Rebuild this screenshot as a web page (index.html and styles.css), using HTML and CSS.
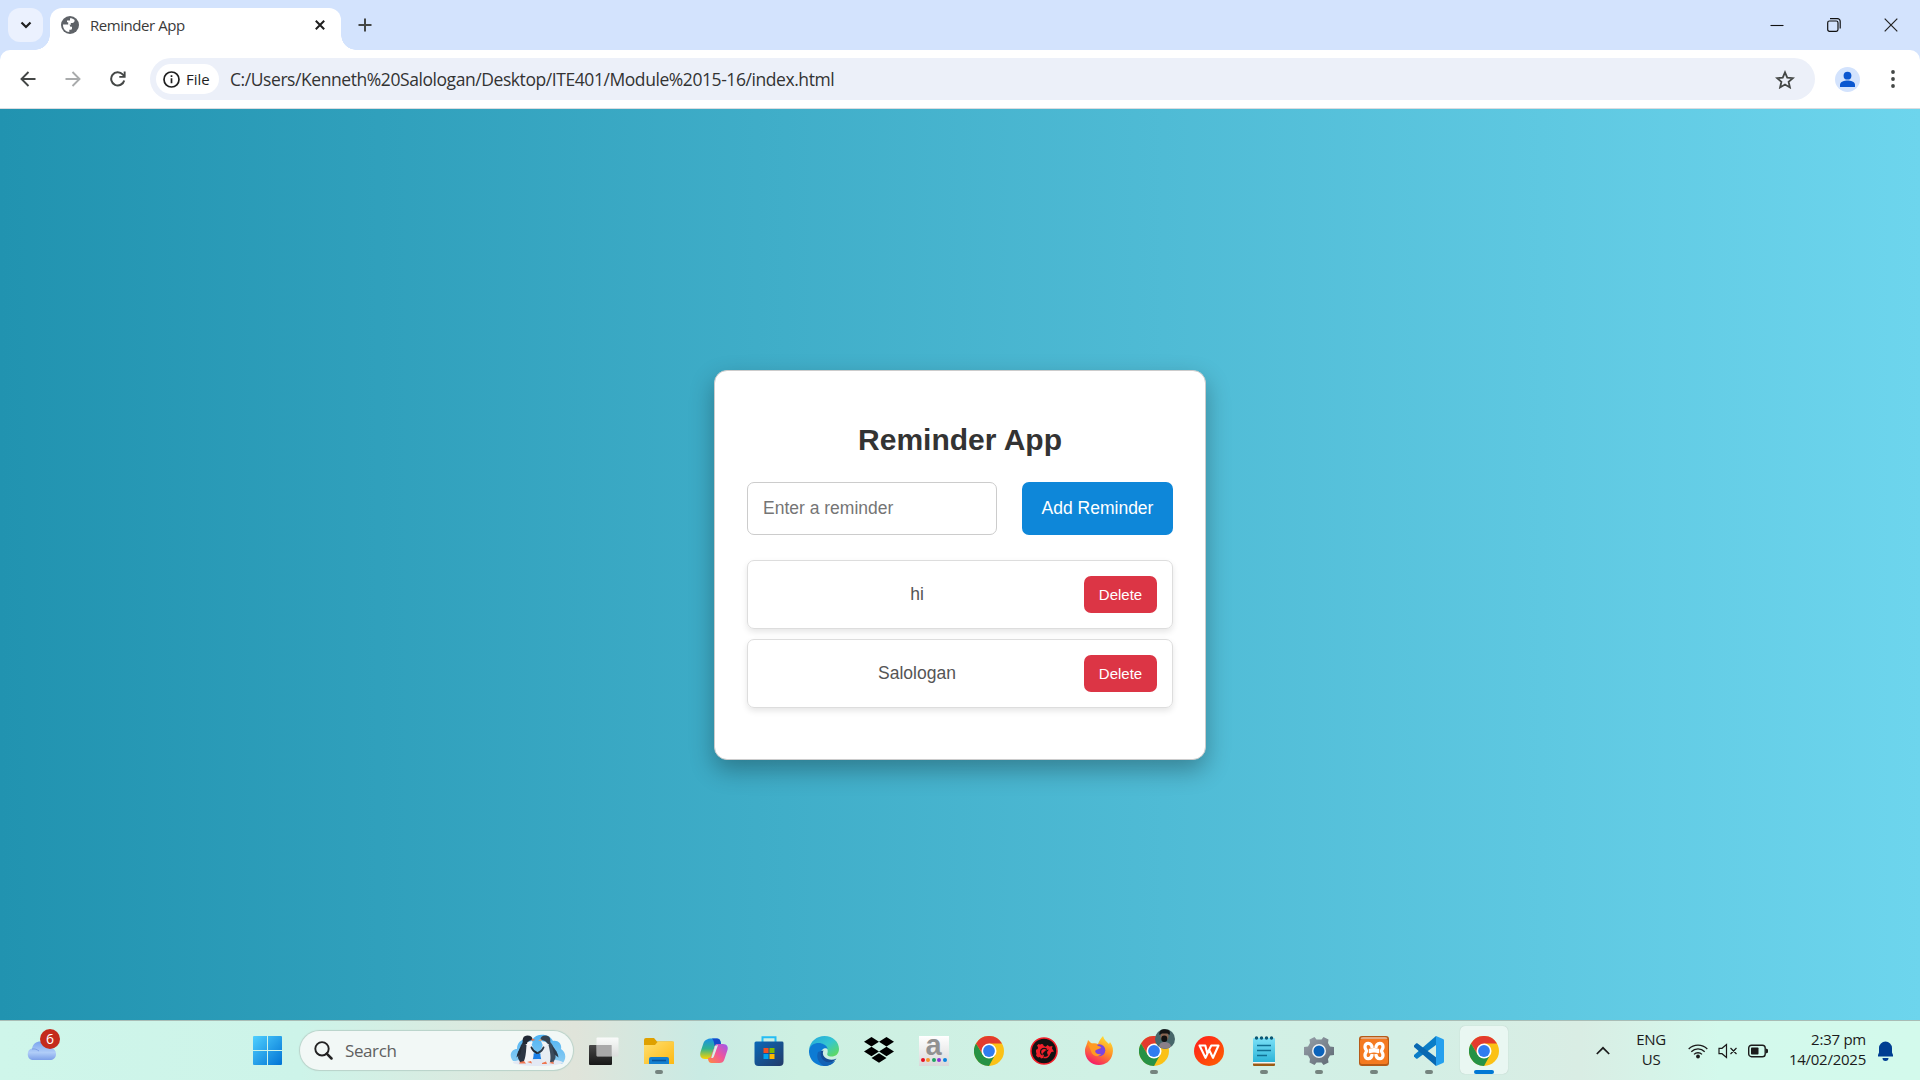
FILE: index.html
```html
<!DOCTYPE html>
<html lang="en">
<head>
<meta charset="utf-8">
<title>Reminder App</title>
<link rel="stylesheet" href="styles.css">
</head>
<body>
<svg class="defs" width="0" height="0" aria-hidden="true">
  <defs>
    <linearGradient id="win" x1="0" y1="0" x2="1" y2="1"><stop offset="0" stop-color="#4fd0ff"/><stop offset="1" stop-color="#0073d4"/></linearGradient>
    <linearGradient id="cloud" x1="0" y1="0" x2="0" y2="1"><stop offset="0" stop-color="#7ba5ee"/><stop offset=".6" stop-color="#b0cdf8"/><stop offset="1" stop-color="#7c9fe8"/></linearGradient>
    <linearGradient id="fold" x1="0" y1="0" x2="1" y2="1"><stop offset="0" stop-color="#ffdf70"/><stop offset="1" stop-color="#fdb913"/></linearGradient>
    <linearGradient id="dark" x1="0" y1="0" x2="0" y2="1"><stop offset="0" stop-color="#484848"/><stop offset="1" stop-color="#171717"/></linearGradient>
    <linearGradient id="cop1" x1="0" y1="0" x2="0" y2="1"><stop offset="0" stop-color="#1b8fe8"/><stop offset=".5" stop-color="#31b48e"/><stop offset="1" stop-color="#ffd400"/></linearGradient>
    <linearGradient id="cop2" x1="1" y1="0" x2="0" y2="1"><stop offset="0" stop-color="#9b56f0"/><stop offset=".5" stop-color="#f0569a"/><stop offset="1" stop-color="#ff8b3d"/></linearGradient>
    <linearGradient id="store" x1="0" y1="0" x2="1" y2="1"><stop offset="0" stop-color="#0a68b8"/><stop offset="1" stop-color="#243a68"/></linearGradient>
    <linearGradient id="edgeTop" x1="0" y1="0" x2="1" y2="1"><stop offset="0" stop-color="#22a6dd"/><stop offset=".5" stop-color="#35c6d0"/><stop offset="1" stop-color="#67dd49"/></linearGradient>
    <linearGradient id="fox" x1=".8" y1="0" x2=".3" y2="1"><stop offset="0" stop-color="#ffe934"/><stop offset=".5" stop-color="#ff8a27"/><stop offset="1" stop-color="#f5156c"/></linearGradient>
    <linearGradient id="wps" x1="0" y1="0" x2="1" y2="1"><stop offset="0" stop-color="#ff1c1c"/><stop offset="1" stop-color="#ff6200"/></linearGradient>
    <linearGradient id="note" x1="0" y1="0" x2="0" y2="1"><stop offset="0" stop-color="#7be0f7"/><stop offset="1" stop-color="#2cb4d8"/></linearGradient>
    <linearGradient id="gear" x1="0" y1="0" x2="1" y2="1"><stop offset="0" stop-color="#98a1aa"/><stop offset="1" stop-color="#5d6772"/></linearGradient>
    <linearGradient id="pond" x1="0" y1="0" x2="0" y2="1"><stop offset="0" stop-color="#4eb3f4"/><stop offset="1" stop-color="#8ccdf2"/></linearGradient>
    <linearGradient id="pane" x1="0" y1="0" x2="0" y2="1"><stop offset="0" stop-color="#fff"/><stop offset="1" stop-color="#dcdcdc"/></linearGradient>
    <symbol id="chrome" viewBox="0 0 30 30">
      <circle cx="15" cy="15" r="15" fill="#fbc116"/>
      <path d="M15 15L8.8 18.5 2 7.5A15 15 0 0 1 28 7.5H15Z" fill="#e33b2e"/>
      <path d="M2 7.5A15 15 0 0 0 15 30L21.3 18.6 15 15 8.6 18.6Z" fill="#269245"/>
      <circle cx="15" cy="15" r="7.5" fill="#fff"/><circle cx="15" cy="15" r="5.9" fill="#2f7cf0"/>
    </symbol>
  </defs>
</svg>

<header class="browser">
  <div class="tabs">
    <button class="tab-search" aria-label="Search tabs"><svg width="12" height="8" viewBox="0 0 12 8"><path d="M1.5 1.5L6 6l4.500-4.500" fill="none" stroke="#1f1f1f" stroke-width="2.200"/></svg></button>
    <div class="tab">
      <svg width="18" height="18" viewBox="0 0 18 18"><circle cx="9" cy="9" r="9" fill="#5f6368"/><path d="M2 8.500h4.500c1.800 0 2.800.9 2.800 2.200H11v1.700c0 .9-.7 1.400-1.600 1.400H8.300V16C4.800 16 2 13 2 9zM9 2.300c2 0 3.400.6 4.600 1.700 0 2.300-1 3-2.300 3H9.800v1.700H7.200V6.200H6V4.500h3z" fill="#fff"/></svg>
      <span class="tab-title">Reminder App</span>
      <svg width="10" height="10" viewBox="0 0 10 10"><path d="M.8.8l8.400 8.400M9.200.8L.8 9.200" stroke="#1f1f1f" stroke-width="2"/></svg>
    </div>
    <svg class="plus" width="14" height="14" viewBox="0 0 14 14"><path d="M7 .500v13M.500 7h13" stroke="#444746" stroke-width="2"/></svg>
    <div class="window-controls">
      <svg width="14" height="14" viewBox="0 0 14 14"><path d="M.500 7.500h13" stroke="#111" stroke-width="1.100"/></svg>
      <svg width="14" height="14" viewBox="0 0 14 14"><g fill="none" stroke="#111" stroke-width="1.200"><rect x=".7" y="3" width="10.300" height="10.300" rx="1.700"/><path d="M3 .700h7.500a2.700 2.700 0 0 1 2.700 2.700v7"/></g></svg>
      <svg width="14" height="14" viewBox="0 0 14 14"><path d="M.700.700l12.600 12.600M13.300.700L.700 13.300" stroke="#222" stroke-width="1.200"/></svg>
    </div>
  </div>
  <div class="toolbar">
    <div class="nav">
      <svg width="16" height="16" viewBox="0 0 16 16"><path d="M15.500 8H2M8.500 1L1.500 8l7 7" fill="none" stroke="#444746" stroke-width="1.900"/></svg>
      <svg width="16" height="16" viewBox="0 0 16 16"><path d="M.500 8H14M7.500 1l7 7-7 7" fill="none" stroke="#a9abac" stroke-width="1.900"/></svg>
      <svg width="16" height="16" viewBox="0 0 16 16"><path d="M14.200 9.400A6.600 6.600 0 1 1 12.700 3.400L14.500 5.300" fill="none" stroke="#444746" stroke-width="2"/><path d="M15.600.500v6.300H9.300V4.900h4.400V.500z" fill="#444746"/></svg>
    </div>
    <div class="omnibox">
      <div class="chip">
        <svg width="17" height="17" viewBox="0 0 17 17"><circle cx="8.500" cy="8.500" r="7.500" fill="none" stroke="#1f1f1f" stroke-width="1.700"/><path d="M8.500 7.300v5M8.500 4.300v1.800" stroke="#1f1f1f" stroke-width="1.700"/></svg>
        <span class="chip-label">File</span>
      </div>
      <span class="url">C:/Users/Kenneth%20Salologan/Desktop/ITE401/Module%2015-16/index.html</span>
      <svg class="star" width="20" height="19" viewBox="0 0 20 19"><path d="M10 2.300l2.250 5.300 5.600.5-4.250 3.700 1.300 5.600L10 14.500l-4.900 2.900 1.300-5.600L2.150 8.100l5.600-.5z" fill="none" stroke="#444746" stroke-width="1.800"/></svg>
    </div>
    <svg class="avatar" width="25" height="25" viewBox="0 0 25 25"><circle cx="12.500" cy="12.500" r="12.500" fill="#d3e3fd"/><circle cx="12.500" cy="8.700" r="3.900" fill="#0b57d0"/><path d="M5 20v-2.200c0-3.200 4.500-4.300 7.500-4.300s7.500 1.100 7.500 4.300V20z" fill="#0b57d0"/></svg>
    <svg class="dots" width="4" height="18" viewBox="0 0 4 18"><g fill="#444746"><circle cx="2" cy="2" r="1.900"/><circle cx="2" cy="9" r="1.900"/><circle cx="2" cy="16" r="1.900"/></g></svg>
  </div>
</header>

<main class="page">
  <section class="card">
    <h1 class="title">Reminder App</h1>
    <div class="form">
      <input class="field" type="text" placeholder="Enter a reminder">
      <button class="add">Add Reminder</button>
    </div>
    <ul class="list">
      <li class="item"><span class="item-text">hi</span><button class="delete">Delete</button></li>
      <li class="item"><span class="item-text">Salologan</span><button class="delete">Delete</button></li>
    </ul>
  </section>
</main>

<footer class="taskbar">
  <div class="weather">
    <svg width="30" height="20" viewBox="0 0 30 20"><path d="M6 19a6 6 0 0 1 0-11.500C7 3 10 .500 14.500.500c4 0 7 2 8 6C27 6.500 30 9 30 13c0 4-3 6-6 6z" fill="url(#cloud)"/><path d="M6 8c3-.5 5 .5 7 2" fill="none" stroke="#7d9fe6"/></svg>
    <span class="badge">6</span>
  </div>
  <div class="apps">
    <div class="app"><svg width="29" height="29" viewBox="0 0 29 29"><path d="M1 0h13v14H0V1a1 1 0 0 1 1-1zM15 0h13a1 1 0 0 1 1 1v13H15zM0 15h14v14H1a1 1 0 0 1-1-1zM15 15h14v13a1 1 0 0 1-1 1H15z" fill="url(#win)"/></svg></div>
    <div class="search">
      <svg width="19" height="19" viewBox="0 0 19 19"><circle cx="8" cy="7.800" r="6.700" fill="none" stroke="#222" stroke-width="1.900"/><path d="M12.700 12.700l4.800 4.800" stroke="#222" stroke-width="2.500" stroke-linecap="round"/></svg>
      <span class="search-label">Search</span>
      <svg width="56" height="33" viewBox="0 0 56 33">
        <path d="M3 27C-2 21 2 15 7 15 7 8 13 3 22 6 26-1 39-1 43 7c6-1 9 4 8 8 5 3 6 10 1 15z" fill="url(#pond)"/>
        <path d="M22 20l5-1 4 1v6h-9z" fill="#1c7fe6"/>
        <ellipse cx="28" cy="28.500" rx="25" ry="3.500" fill="#e3e9f4"/>
        <path d="M14 9h7c2.500 5 3 9 2.500 13-.3 3-1.500 6-4 7h-6z" fill="#f3f4f7"/>
        <path d="M13 8c-3 4-5 10-5 16l2.500 5 3-1c2-4 2.500-9 3-17z" fill="#2a3442"/>
        <path d="M12 12c-3 3-5 7-5.500 11.500l4-3.500z" fill="#222b37"/><path d="M21.500 13.500c1 2.500 3 4.500 5.500 5.500" fill="none" stroke="#222b37" stroke-width="1.900" stroke-linecap="round"/>
        <path d="M13 10c-1-5 0-8.500 4.500-8.500 3 0 5 1.500 5 4L19 7l-2 3z" fill="#222935"/>
        <path d="M17.500 8l4.500-1c1 1 .500 3-1 4h-4z" fill="#f7f7f8"/><path d="M22 4.500l3.500 1.500-4 1z" fill="#e9724a"/>
        <path d="M41 9h-7c-3 5-4 9-3.500 13 .3 3 2 6 4.500 7h6z" fill="#e8edf2"/>
        <path d="M40 8c4 4 6 10 5.500 16L43 29l-3-1c1-4 .500-9-1.500-17z" fill="#3b4b5c"/>
        <path d="M42 12c3.500 3 6 7 6.500 11.500L44 20z" fill="#2d3a49"/><path d="M33.500 13.500c-1 2.500-3 4.500-5.500 5.500" fill="none" stroke="#2d3a49" stroke-width="1.900" stroke-linecap="round"/>
        <path d="M40 10c1-5 0-8.500-4.500-8.500-3 0-5 1.500-5 4L35 7l3 3z" fill="#36424f"/>
        <path d="M31 7l5 1c1 1 1 3 0 4h-3z" fill="#f1f3f5"/><path d="M31 5l-3 1.500 4 .500z" fill="#e5a06c"/>
        <path d="M10 28l4-1 2 2.500H9zM17 28l4-1 1 2.500zM32 29l4-1.500 1 2.500h-5zM39 29l4-1.500 1 2.500z" fill="#ee7650"/>
      </svg>
    </div>
    <div class="app"><svg width="30" height="30" viewBox="0 0 30 30"><rect x="0" y="9" width="23" height="20" rx="1" fill="url(#dark)"/><rect x="7.500" y="1.500" width="22" height="19" rx="1" fill="url(#pane)" opacity=".85"/><path d="M8 9h14.500v11H8z" fill="#a9a9a9"/></svg></div>
    <div class="app open"><svg width="30" height="30" viewBox="0 0 30 30"><path d="M0 4a2 2 0 0 1 2-2h8l3 3.500h15a2 2 0 0 1 2 2V12H0z" fill="#dfa000"/><path d="M0 9h11l3-3.500h16V28H0z" fill="url(#fold)"/><path d="M5 28v-5a2 2 0 0 1 2-2h16a2 2 0 0 1 2 2v5z" fill="#1480d0"/><path d="M8 24.500h14" stroke="#07549c" stroke-width="1.600"/></svg></div>
    <div class="app"><svg width="30" height="30" viewBox="0 0 30 30"><path d="M8 3.500C9 2.700 10 2.500 11 2.500h7c2 0 3 1 3.500 3L22 8h-3c-2 0-3 1-3.500 3l-2.500 8c-1 3-2 4-4 4H6c-4 0-5.500-3-4.500-7L4.500 7C5.200 5 6.500 4 8 3.500z" fill="url(#cop1)"/><path d="M14 2.500h4c2 0 3 1 3.500 3L22 8h-3c-2 0-3 .7-3.500 2C15 7 15 4 13 2.500z" fill="#1549ca"/><path d="M22 8h2c4 0 5.500 3 4.500 6l-3 9c-1 3-2.500 4-5 4h-8c-2 0-2.700-1-3.300-3L9 22c2 0 3-1 3.500-3l3-8C16 9 17 8 19 8z" fill="url(#cop2)"/><path d="M16 10l3-1-4.300 12c-.5 1-1.200 1-2.500 1z" fill="#d9f1e8"/></svg></div>
    <div class="app"><svg width="30" height="30" viewBox="0 0 30 30"><path d="M8.500 8V1.300h13V8" fill="none" stroke="#25bdf4" stroke-width="2"/><path d="M.500 7a1.500 1.500 0 0 1 1.500-1.500h26A1.500 1.500 0 0 1 29.500 7v19a4 4 0 0 1-4 4h-21a4 4 0 0 1-4-4z" fill="url(#store)"/><path d="M9.500 12h5v5h-5z" fill="#f25022"/><path d="M15.500 12h5v5h-5z" fill="#7fba00"/><path d="M9.500 18h5v5h-5z" fill="#00a4ef"/><path d="M15.500 18h5v5h-5z" fill="#ffb900"/></svg></div>
    <div class="app"><svg width="30" height="30" viewBox="0 0 30 30"><path d="M0 14C1 5 8 0 15.500 0 24 0 30 6 30 13c0 5-3.500 7.500-7.500 7.500-3.500 0-5-1.500-4-3.500C20 12 15 7 9 7.500 4.500 8 1 11 0 14z" fill="url(#edgeTop)"/><path d="M0 14.500C1 9 5 7 9.500 7 14 7 18 9.500 18.700 13c-2-2-7 0-7 4.500 0 6 6 9.500 11.300 8.500l3-1C23 28.500 19 30 15 30 6 30-.500 23 0 14.500z" fill="#0d7bd4"/><path d="M12 15c-4 6 2 13 9.500 11.500 2.500-.500 4.500-2 6-4-4 2-9 1.500-12-1.500-2-2-2-4.500-1-6.500z" fill="#134d97"/><path d="M9 16c-2 5 0 11 6 14 5 0 9-2 11-5-8 4-16-1-14-10z" fill="#1262b6"/></svg></div>
    <div class="app"><svg width="30" height="27" viewBox="0 0 30 27"><path d="M7.500 0L15 4.800 7.500 9.500 0 4.800zM22.500 0L30 4.800 22.500 9.500 15 4.800zM7.500 9.800L15 14.500 7.500 19.200 0 14.500zM22.500 9.800L30 14.500 22.500 19.200 15 14.500zM15 16.200L22.500 21 15 25.800 7.500 21z"/></svg></div>
    <div class="app"><div class="amazon"><span class="amazon-a">a</span><div class="amazon-dots"><i></i><i></i><i></i><i></i><i></i></div></div></div>
    <div class="app"><svg width="30" height="30"><use href="#chrome"/></svg></div>
    <div class="app"><svg width="28" height="28" viewBox="0 0 28 28"><circle cx="14" cy="14" r="13" fill="#121212" stroke="#f51d29" stroke-width="1.600"/><path d="M11 7l2 .300.800 1.700 2 .700L17.500 8l2 1.500 3-.500-.500 2.500 2 3-2.500.500-2 3-2-.500-.500-2.500 2-2.500-3.500 1-3 3 1.500 2-1 2.500-2 .500-1-1.500-2 .500-2-2 .500-1.800L6 15v-2.200l1.700-.800.300-1.700-1-1.800L8.700 7l1.500.800z" fill="#f0202b"/><path d="M17 12.500c-3-2.500-6.500-.500-6.500 2.500 0 1.500 1 2.500 2 3" fill="none" stroke="#141414" stroke-width="1.300"/><path d="M13.500 20.500c3 .500 5.500-1 6-4" fill="none" stroke="#f0202b" stroke-width="1.500"/></svg></div>
    <div class="app"><svg width="30" height="30" viewBox="0 0 30 30"><path d="M1 15C1 11 3 9 4 4l4 4c2-1 4-1 6 0 1-3 3-6 5-8 1 4 4 6 6 8l1-2c3 4 3.500 8 2.500 12C27 25 21.500 29 15 29 7 29 1 23 1 15z" fill="url(#fox)"/><circle cx="15.300" cy="14.300" r="6" fill="#7b45df"/><path d="M4 8c4-2 9 0 10 2 2 0 3 1 3 2l-5 2c-2 1 0 5 5 4-3 4-9 2-10-3z" fill="#ff9a22"/></svg></div>
    <div class="app open"><svg width="30" height="30"><use href="#chrome"/></svg>
      <svg class="profile" width="20" height="20" viewBox="0 0 20 20"><circle cx="10" cy="10" r="10" fill="#47666a"/><path d="M4 17.500c.500-3.500 3-4.500 5.500-4.500s6 1 6.500 4.500a10 10 0 0 1-12 0z" fill="#897f88"/><circle cx="9.500" cy="7.500" r="4" fill="#8a6652"/><path d="M4.500 6C3.500 1 8-.500 11 .500c4 0 4.500 3 3.500 5.500L12.500 4.500H7z" fill="#151515"/><ellipse cx="9.300" cy="9.800" rx="3" ry="3.300" fill="#111"/></svg></div>
    <div class="app"><svg width="30" height="30" viewBox="0 0 30 30"><circle cx="15" cy="15" r="15" fill="url(#wps)"/><path d="M5.500 9.500h5.800l2 8 4-8h7.200l-5.500 12.300L15.200 14l-3.700 7.800z" fill="none" stroke="#fff" stroke-width="2.100" stroke-linejoin="round"/></svg></div>
    <div class="app open"><svg width="22" height="30" viewBox="0 0 22 30"><path d="M0 26h22v3a1 1 0 0 1-1 1H1a1 1 0 0 1-1-1z" fill="#9b5a14"/><path d="M0 25h22v2.500H0z" fill="#f4f4f4"/><path d="M0 3a1 1 0 0 1 1-1h20a1 1 0 0 1 1 1v23H0z" fill="url(#note)"/><g fill="#0d5873"><circle cx="3.500" cy="2" r="1.700"/><circle cx="8.500" cy="2" r="1.700"/><circle cx="13.500" cy="2" r="1.700"/><circle cx="18.500" cy="2" r="1.700"/></g><path d="M4 9.500h14M4 14.500h14M4 19.500h10" stroke="#116f93" stroke-width="1.700"/></svg></div>
    <div class="app open"><svg width="30" height="28" viewBox="0 0 30 28"><path d="M10.500 0l2 2.500h5l2-2.500 5 2.500-.500 3.500 2 3.500 4 .500v8l-4 .500-2 3.500.500 3.500-5 2.500-2-2.500h-5l-2 2.500-5-2.500.500-3.500-2-3.500-4-.500v-8l4-.500 2-3.500-.500-3.500z" fill="url(#gear)"/><circle cx="15" cy="14" r="7" fill="#eef2f5"/><circle cx="15" cy="14" r="5.500" fill="#0b63bb"/></svg></div>
    <div class="app open"><svg width="30" height="30" viewBox="0 0 30 30"><rect width="30" height="30" rx="3" fill="#b65a17"/><rect x="1" y="3" width="28" height="25" rx="2" fill="#f47a20"/><path d="M1.500 3Q1.500 1 4 1h22q2.500 0 2.500 2z" fill="#e3ab83"/><g fill="none" stroke="#fff" stroke-width="3.300" stroke-linejoin="round"><path d="M13.200 12C12.500 5.800 5.800 6 6 11c0 2 1.500 3 1.500 4S6 17 6 19c-.200 5 6.500 5.200 7.200-1"/><path d="M16.800 12C17.500 5.800 24.200 6 24 11c0 2-1.500 3-1.500 4s1.500 2 1.500 4c.200 5-6.500 5.200-7.200-1"/><path d="M10.500 13.500q4.500-1.500 9 0v3q-4.500-1.500-9 0z" stroke-width="1.500" fill="#fff"/></g></svg></div>
    <div class="app open"><svg width="30" height="30" viewBox="0 0 30 30"><path d="M22 0L0 19c-.4.500-.4 1 0 1.500l2 2c.5.400 1 .4 1.600 0L24 7.500z" fill="#0a7dc7"/><path d="M0 9.500c-.4.500-.4 1 0 1.500l22 19 1-8L3.600 7.500C3 7 2.500 7 2 7.500z" fill="#0868b2"/><path d="M22 0l7 3c.700.300 1 .8 1 1.500v21c0 .7-.3 1.200-1 1.500l-7 3z" fill="#25a0ee"/></svg></div>
    <div class="app active"><svg width="30" height="30"><use href="#chrome"/></svg></div>
  </div>
  <div class="tray">
    <svg class="chev" width="14" height="9" viewBox="0 0 14 9"><path d="M.8 8L7 1.800 13.200 8" fill="none" stroke="#1b1b1b" stroke-width="1.700"/></svg>
    <div class="lang"><span>ENG</span><span>US</span></div>
    <div class="status">
      <svg width="20" height="16" viewBox="0 0 20 16"><g fill="none" stroke="#1b1b1b" stroke-width="1.300"><path d="M.700 6a13.200 13.200 0 0 1 18.600 0M3.300 8.700a9.500 9.500 0 0 1 13.400 0M6 11.400a5.700 5.700 0 0 1 8 0"/></g><circle cx="10" cy="13.500" r="1.900" fill="#1b1b1b"/></svg>
      <svg width="20" height="16" viewBox="0 0 20 16"><g fill="none" stroke="#1b1b1b" stroke-width="1.200"><path d="M1 5.300h3L8.500 1.500v13L4 10.700H1zM12.500 5l6 6M18.500 5l-6 6"/></g></svg>
      <svg width="20" height="14" viewBox="0 0 20 14"><rect x=".7" y="1.200" width="16.500" height="11.500" rx="2.800" fill="none" stroke="#1b1b1b" stroke-width="1.400"/><rect x="3" y="3.500" width="7.500" height="7" rx=".800" fill="#1b1b1b"/><path d="M18 4.500l2 1v3l-2 1z" fill="#1b1b1b"/></svg>
    </div>
    <div class="clock"><span class="time">2:37 pm</span><span>14/02/2025</span></div>
    <svg class="bell" width="17" height="20" viewBox="0 0 17 20"><path d="M1 15.500V14l1-2.500V7a6.500 6.500 0 0 1 13 0v4.500l1 2.500v1.500zM5.500 17h6a3 3 0 0 1-6 0z" fill="#003e92"/></svg>
  </div>
</footer>
</body>
</html>
```
FILE: styles.css
```css
* { box-sizing: border-box; }
body {
  margin: 0;
  width: 1920px;
  height: 1080px;
  display: flex;
  flex-direction: column;
  overflow: hidden;
  font-family: "Open Sans", "Noto Sans", sans-serif;
}
svg { display: block; flex: none; }
.defs { position: absolute; }
button { border: 0; font: inherit; }

.browser { height: 109px; flex: none; background: #d3e3fd; }
.tabs { height: 50px; display: flex; align-items: center; padding-left: 8px; }
.tab-search {
  width: 35px;
  height: 34px;
  padding: 0;
  border-radius: 12px;
  background: #ebf1fe;
  display: grid;
  place-items: center;
}
.tab {
  position: relative;
  width: 291px;
  height: 42px;
  align-self: flex-end;
  margin-left: 7px;
  padding: 0 16px 8px 11px;
  border-radius: 12px 12px 0 0;
  background: #fff;
  display: flex;
  align-items: center;
}
.tab::before, .tab::after {
  content: "";
  position: absolute;
  bottom: 0;
  width: 15px;
  height: 15px;
}
.tab::before { left: -15px; background: radial-gradient(circle at 0 0, transparent 14.5px, #fff 15px); }
.tab::after { right: -15px; background: radial-gradient(circle at 100% 0, transparent 14.5px, #fff 15px); }
.tab-title { flex: 1; margin-left: 11px; font-size: 15px; letter-spacing: -.45px; color: #3a3a3a; }
.plus { margin-left: 17px; }
.window-controls { margin-left: auto; display: flex; gap: 43px; padding-right: 22px; }

.toolbar {
  height: 59px;
  background: #fff;
  border-bottom: 1px solid #dadce0;
  border-radius: 10px 10px 0 0;
  display: flex;
  align-items: center;
  padding-left: 20px;
}
.nav { display: flex; gap: 29px; }
.omnibox {
  width: 1665px;
  height: 42px;
  margin-left: 24px;
  border-radius: 21px;
  background: #ecf0f9;
  display: flex;
  align-items: center;
  padding: 0 20px 0 6px;
}
.chip {
  width: 63px;
  height: 30px;
  border-radius: 15px;
  background: #fff;
  display: flex;
  align-items: center;
  padding-left: 7px;
  gap: 6px;
}
.chip-label { font-size: 15px; color: #1f1f1f; }
.url { margin-left: 11px; font-size: 17.5px; letter-spacing: -.43px; color: #333; white-space: nowrap; }
.star { margin-left: auto; }
.avatar { margin-left: 20px; }
.dots { margin-left: 30.5px; }

.page {
  flex: 1;
  min-height: 0;
  display: flex;
  align-items: center;
  justify-content: center;
  background: linear-gradient(to right, #2193b0, #6dd5ed);
  font-family: "Liberation Sans", Arial, sans-serif;
}
.card {
  width: 492px;
  height: 390px;
  padding: 51px 32px 0;
  border: 1px solid #ccc;
  border-radius: 13px;
  background: #fff;
  box-shadow: 0 10px 25px rgba(0, 0, 0, .3);
}
.title { margin: 0 0 24px; font-size: 30px; line-height: 36px; text-align: center; color: #333; }
.form { display: flex; justify-content: space-between; }
.field {
  width: 250px;
  height: 53px;
  padding: 0 15px;
  border: 1px solid #ccc;
  border-radius: 7px;
  font: 17.5px "Liberation Sans", Arial, sans-serif;
}
.field::placeholder { color: #757575; }
.add {
  width: 151px;
  height: 53px;
  padding: 0;
  border-radius: 7px;
  background: #0e87d9;
  color: #fff;
  font-size: 17.5px;
}
.list { list-style: none; margin: 25px 0 0; padding: 0; display: flex; flex-direction: column; gap: 10px; }
.item {
  height: 69px;
  padding: 0 15px;
  border: 1px solid #ddd;
  border-radius: 7px;
  box-shadow: 0 3px 6px rgba(0, 0, 0, .1);
  display: flex;
  align-items: center;
}
.item-text { flex: 1; margin-right: 13px; text-align: center; font-size: 17.5px; color: #555; }
.delete { width: 73px; height: 37px; padding: 0; border-radius: 7px; background: #dc3545; color: #fff; font-size: 15px; }

.taskbar {
  height: 60px;
  flex: none;
  border-top: 1px solid #a9bdb6;
  background: linear-gradient(to right, #cff6ea 0, #cdf4e9 300px, #dbe9df 480px, #e0e4da 575px, #c9ebe4 700px, #cdf0e2 800px, #d0f1e5 1100px, #d3efe5 1400px, #d9ede4 1580px, #d3f9ec 1720px, #d3faec 100%);
  display: flex;
  color: #1b1b1b;
}
.weather { position: relative; width: 240px; padding: 20px 0 0 26px; }
.badge {
  position: absolute;
  left: 40px;
  top: 8px;
  width: 20px;
  height: 20px;
  border-radius: 50%;
  background: #c42b1c;
  color: #fff;
  font-size: 14px;
  line-height: 20px;
  text-align: center;
}
.apps { display: flex; align-items: center; }
.app { position: relative; width: 55px; height: 59px; display: grid; place-items: center; }
.app.open::after, .app.active::after {
  content: "";
  position: absolute;
  left: 23.500px;
  bottom: 6px;
  width: 8px;
  height: 4px;
  border-radius: 2px;
  background: #75847f;
}
.app.active::before {
  content: "";
  position: absolute;
  left: 3.500px;
  top: 5px;
  width: 48px;
  height: 48px;
  border-radius: 5px;
  background: #e9f7f2;
  box-shadow: 0 0 1px #a9bdb6;
}
.app.active svg { position: relative; }
.app.active::after { left: 17.500px; width: 20px; background: #0078d4; }
.profile { position: absolute; left: 29px; top: 8px; }
.search {
  width: 273px;
  height: 39px;
  margin: 0 3px 0 5px;
  padding: 0 7px 0 14px;
  border-radius: 20px;
  background: #f2f8f6;
  box-shadow: 0 0 1px 1px #b9d2c9;
  display: flex;
  align-items: center;
}
.search-label { flex: 1; margin-left: 12px; font-size: 17px; letter-spacing: -.4px; color: #606060; }
.amazon {
  width: 30px;
  height: 30px;
  background: linear-gradient(#fff, #d9d9d9);
  display: flex;
  flex-direction: column;
  align-items: center;
}
.amazon-a { height: 22px; font: bold 29px/19px "Liberation Sans", Arial, sans-serif; color: #919191; }
.amazon-dots { display: flex; gap: 1.500px; }
.amazon-dots i { width: 4px; height: 4px; border-radius: 50%; background: #e81123; }
.amazon-dots i:nth-child(2) { background: #f7922a; }
.amazon-dots i:nth-child(3) { background: #20a464; }
.amazon-dots i:nth-child(4) { background: #8b32d2; }
.amazon-dots i:nth-child(5) { background: #0a84e0; }

.tray { flex: 1; display: flex; align-items: center; justify-content: flex-end; padding-right: 26px; }
.lang, .clock { display: flex; flex-direction: column; padding-bottom: 3px; font-size: 15px; line-height: 20px; letter-spacing: -.25px; }
.lang { align-items: center; margin: 0 22px 0 26px; }
.status { display: flex; align-items: center; gap: 10px; width: 80px; }
.clock { width: 78px; margin: 0 11px 0 20px; align-items: flex-end; white-space: nowrap; }
```
